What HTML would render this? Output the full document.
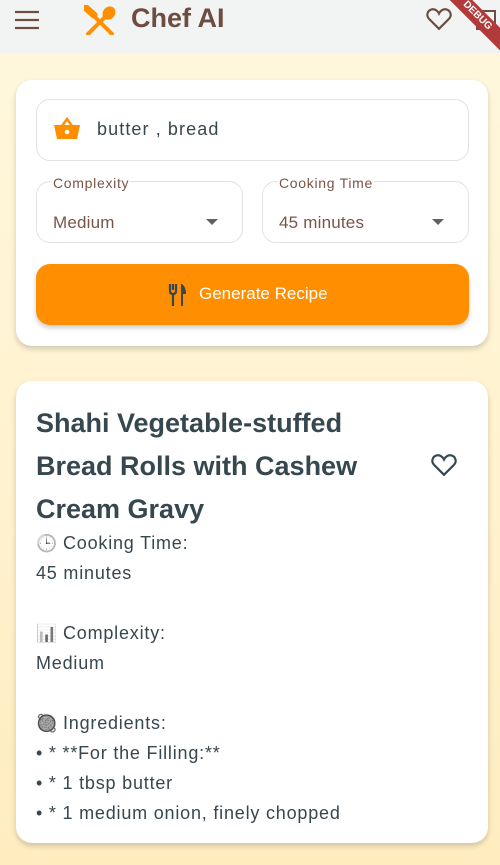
<!DOCTYPE html><html><head><style>
body{margin:0;width:500px;height:865px;overflow:hidden;font-family:"Liberation Sans",sans-serif;background:linear-gradient(#fff8df,#ffedc0);position:relative}
.bar{position:absolute;top:0;left:0;width:500px;height:53px;background:#f2f3f3}
.card{position:absolute;left:16px;width:472px;background:#fff;border-radius:16px;box-shadow:0 3px 6px rgba(0,0,0,.18)}
.field{position:absolute;border:1.5px solid #e2e2e2;border-radius:14px;box-sizing:border-box}
.lbl{position:absolute;top:-6px;left:15px;background:#fff;padding:0 1px;font-size:14px;color:#795548;line-height:14px;letter-spacing:.7px}
.val{position:absolute;left:16px;top:31px;font-size:17px;color:#795548;letter-spacing:.2px}
.arr{position:absolute;right:24px;top:37px;width:0;height:0;border-left:6px solid transparent;border-right:6px solid transparent;border-top:6px solid #616161}
.t{position:absolute;left:20px;font-size:18px;color:#37474f;letter-spacing:.8px}
.t div{height:30px;line-height:30px;white-space:nowrap}
.e{font-size:17px;filter:grayscale(1);letter-spacing:0}
</style></head><body>
<div class="bar">
<svg style="position:absolute;left:14px;top:10px" width="26" height="20" viewBox="0 0 26 20"><path d="M1 2h24M1 10h24M1 18h24" stroke="#6d4c41" stroke-width="2.2"/></svg>
<svg style="position:absolute;left:84px;top:5px" width="34" height="30" viewBox="0 0 34 30"><path d="M2 3 L28 29" stroke="#ff8f00" stroke-width="4" stroke-linecap="round"/><path d="M2 3 L10 10" stroke="#ff8f00" stroke-width="7" stroke-linecap="round"/><ellipse cx="25" cy="8" rx="6" ry="7" fill="#ff8f00" transform="rotate(40 25 8)"/><path d="M21 12 L4 29" stroke="#ff8f00" stroke-width="4" stroke-linecap="round"/></svg>
<div style="position:absolute;left:131px;top:3px;font-size:27px;color:#6d4c41;font-weight:bold">Chef AI</div>
<svg style="position:absolute;left:425px;top:7px" width="28" height="24" viewBox="0 0 24 22"><path d="M12 20 L3 11 C0 8 1 3 6 2 C9 2 11 4 12 6 C13 4 15 2 18 2 C23 3 24 8 21 11 Z" fill="none" stroke="#6d4c41" stroke-width="2"/></svg>
<div style="position:absolute;left:476px;top:10px;width:20px;height:20px;border:2px solid #6d4c41;box-sizing:border-box"></div>
<div style="position:absolute;right:-32px;top:8px;width:110px;height:16px;background:#b13b3b;color:#fff;font-size:10px;font-weight:bold;text-align:center;line-height:16px;transform:rotate(45deg)">DEBUG</div>
</div>
<div class="card" style="top:80px;height:266px">
<div class="field" style="left:20px;top:19px;width:433px;height:62px">
<svg style="position:absolute;left:16px;top:17px" width="28" height="24" viewBox="0 0 28 24"><path d="M9 9 L14 2 L19 9" fill="none" stroke="#ff8f00" stroke-width="2.5"/><path d="M1 8h26l-3 14H4z" fill="#ff8f00"/><circle cx="14" cy="15" r="2.3" fill="#fff"/></svg>
<div style="position:absolute;left:60px;top:19px;font-size:18px;color:#37474f;letter-spacing:1.1px">butter , bread</div></div>
<div class="field" style="left:20px;top:101px;width:207px;height:62px"><div class="lbl">Complexity</div><div class="val">Medium</div><div class="arr"></div></div>
<div class="field" style="left:246px;top:101px;width:207px;height:62px"><div class="lbl">Cooking Time</div><div class="val">45 minutes</div><div class="arr"></div></div>
<div style="position:absolute;left:20px;top:184px;width:433px;height:61px;background:#ff8f00;border-radius:14px;box-shadow:0 3px 5px rgba(0,0,0,.2)">
<svg style="position:absolute;left:132px;top:20px" width="20" height="22" viewBox="0 0 20 22"><path d="M2 0v7q0 3 3 3v12M8 0v7q0 3-3 3M5 0v6" fill="none" stroke="#37474f" stroke-width="2.2"/><path d="M14 0q4 3 4 10h-3v12h-2V0z" fill="#37474f"/></svg>
<div style="position:absolute;left:163px;top:20px;font-size:17px;color:#fff">Generate Recipe</div></div>
</div>
<div class="card" style="top:381px;height:462px">
<div style="position:absolute;left:20px;top:21px;width:380px;font-size:27px;line-height:43px;color:#37474f;font-weight:bold">Shahi Vegetable-stuffed Bread Rolls with Cashew Cream Gravy</div>
<svg style="position:absolute;left:414px;top:72px" width="28" height="24" viewBox="0 0 24 22"><path d="M12 20 L3 11 C0 8 1 3 6 2 C9 2 11 4 12 6 C13 4 15 2 18 2 C23 3 24 8 21 11 Z" fill="none" stroke="#37474f" stroke-width="2"/></svg>
<div class="t" style="top:147px"><div><span class="e">🕒</span> Cooking Time:</div><div>45 minutes</div><div></div><div><span class="e">📊</span> Complexity:</div><div>Medium</div><div></div><div><span class="e">🥘</span> Ingredients:</div><div>• * **For the Filling:**</div><div>• * 1 tbsp butter</div><div>• * 1 medium onion, finely chopped</div></div>
</div>
</body></html>
